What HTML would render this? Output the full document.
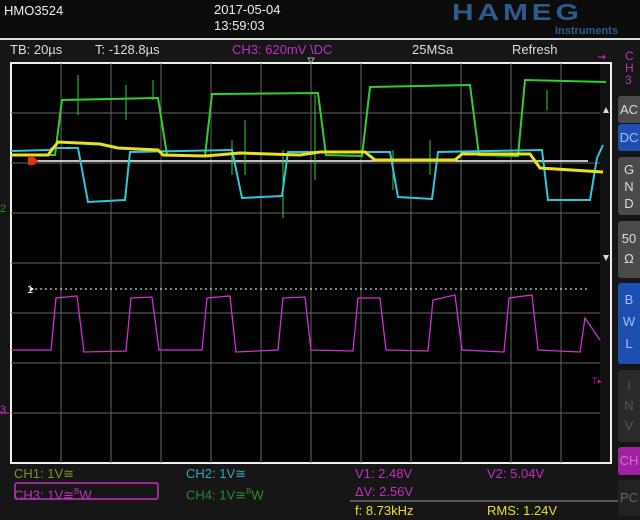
<!DOCTYPE html>
<html><head><meta charset="utf-8"><style>
html,body{margin:0;padding:0;}
body{width:640px;height:520px;background:#161616;position:relative;overflow:hidden;font-family:"Liberation Sans",sans-serif;font-size:13px;color:#ddd;}
.t{position:absolute;white-space:nowrap;line-height:14px;}
.top{position:absolute;left:0;top:0;width:640px;height:39px;background:#0c0c0c;}
.btn{position:absolute;left:618px;width:22px;text-align:center;font-size:13px;line-height:15px;border-radius:3px 0 0 3px;}
</style></head><body>
<div class="top"></div>
<div class="t" style="left:4px;top:4px;color:#eee">HMO3524</div>
<div class="t" style="left:214px;top:3px;color:#eee">2017-05-04</div>
<div class="t" style="left:214px;top:19px;color:#eee">13:59:03</div>
<div class="t" style="left:452px;top:0px;color:#2e5b8c;font-size:23px;font-weight:bold;letter-spacing:3px;transform:scaleX(1.3);transform-origin:left;line-height:24px">HAMEG</div>
<div class="t" style="left:555px;top:24px;color:#2e5b8c;font-size:11px;font-weight:bold">Instruments</div>
<div style="position:absolute;left:0;top:38px;width:640px;height:2px;background:#ddd"></div>
<div class="t" style="left:10px;top:43px">TB: 20µs</div>
<div class="t" style="left:95px;top:43px">T: -128.8µs</div>
<div class="t" style="left:232px;top:43px;color:#c030c0">CH3: 620mV \DC</div>
<div class="t" style="left:412px;top:43px">25MSa</div>
<div class="t" style="left:512px;top:43px">Refresh</div>
<svg style="position:absolute;left:0;top:0" width="640" height="520">
<rect x="11" y="63" width="600" height="400" fill="#000" stroke="#eee" stroke-width="2"/>
<g stroke="#666" stroke-width="1">
<path d="M61 63V463M111 63V463M161 63V463M211 63V463M261 63V463M311 63V463M361 63V463M411 63V463M461 63V463M511 63V463M561 63V463"/>
<path d="M11 113H600M11 163H600M11 213H600M11 263H600M11 313H600M11 363H600M11 413H600"/>
</g>
<rect x="600" y="64" width="10" height="398" fill="#111"/>
<path d="M603 113l3-6 3 6zM603 255l3 6 3-6z" fill="#ddd"/>
<path d="M308 58l3 5 3-5z" fill="none" stroke="#aaa"/>
<path d="M35 161H588" stroke="#fff" stroke-width="1.5"/>
<path d="M28 157h6l4 4-4 4h-6z" fill="#e03010"/>
<path d="M35 289H590" stroke="#fff" stroke-dasharray="2 3"/>
<text x="27" y="293" fill="#fff" font-size="11" font-family="Liberation Sans">1</text>
<path d="M34 289l-3-2v4z" fill="#fff"/>
<text x="0" y="212" fill="#2a8a2a" font-size="11" font-family="Liberation Sans">2</text>
<text x="0" y="413" fill="#c030c0" font-size="11" font-family="Liberation Sans">3</text>
<path d="M0 413h9" stroke="#c030c0"/>
<polyline fill="none" stroke="#30d030" stroke-width="2" points="11,155 55,155 62,100 158,98 167,155 205,156 212,94 318,93 326,155 362,156 370,87 470,85 479,155 518,156 525,80 606,82"/>
<path d="M78 75V115M126 85V120M153 80V100M245 120V175M283 150V218M315 95V180M393 150V190M430 140V175M547 90V110M232 140V175" stroke="#30d030"/>
<polyline fill="none" stroke="#30c8d8" stroke-width="2" points="11,151 50,150 52,148 78,148 88,202 125,200 130,152 232,150 242,198 282,196 288,152 390,152 398,197 432,199 438,152 542,150 548,200 590,200 597,158 603,145"/>
<polyline fill="none" stroke="#e8e020" stroke-width="3" points="11,155 48,155 58,142 100,144 118,148 158,150 163,155 205,156 240,153 300,155 320,152 365,152 375,160 455,160 462,154 530,154 540,168 603,172"/>
<polyline fill="none" stroke="#d030d0" stroke-width="1.3" points="11,350 51,350 56,298 77,296 84,352 126,351 131,298 152,297 159,350 202,350 207,298 230,296 236,352 278,350 283,298 305,297 311,350 353,351 358,298 380,298 386,350 428,351 433,300 455,295 462,350 504,352 509,298 532,295 538,350 580,352 585,318 600,340"/>
<text x="592" y="384" fill="#a02090" font-size="9" font-family="Liberation Sans">T▸</text>
<path d="M598 57h7l-2-2M605 57l-2 2" stroke="#c030c0" fill="none"/>
<rect x="15" y="483" width="143" height="16" fill="none" stroke="#c030c0" stroke-width="1.5" rx="2"/>
<path d="M350 501H640" stroke="#999"/>
</svg>
<div class="t" style="left:625px;top:50px;color:#c030c0;font-size:12px;line-height:12px;width:12px">C<br>H<br>3</div>
<div class="btn" style="top:96px;height:27px;background:#4a4a4a;line-height:27px">AC</div>
<div class="btn" style="top:124px;height:27px;background:#1e4eb0;color:#9cc0ff;line-height:27px">DC</div>
<div class="btn" style="top:157px;height:58px;background:#4a4a4a;padding-top:4px;box-sizing:border-box;line-height:17px">G<br>N<br>D</div>
<div class="btn" style="top:221px;height:57px;background:#4a4a4a;padding-top:8px;box-sizing:border-box;line-height:20px">50<br>Ω</div>
<div class="btn" style="top:283px;height:81px;background:#1e4eb0;color:#9cc0ff;padding-top:6px;box-sizing:border-box;line-height:22px">B<br>W<br>L</div>
<div class="btn" style="top:370px;height:72px;background:#2a2a2a;color:#555;padding-top:6px;box-sizing:border-box;line-height:20px">I<br>N<br>V</div>
<div class="btn" style="top:447px;height:28px;background:#a020a0;color:#d070d0;line-height:28px">CH</div>
<div class="btn" style="top:480px;height:36px;background:#222;color:#666;line-height:36px">PC</div>
<div class="t" style="left:14px;top:467px;color:#8c8c20">CH1: 1V≅</div>
<div class="t" style="left:186px;top:467px;color:#30a8b0">CH2: 1V≅</div>
<div class="t" style="left:355px;top:467px;color:#c030c0">V1: 2.48V</div>
<div class="t" style="left:487px;top:467px;color:#c030c0">V2: 5.04V</div>
<div class="t" style="left:14px;top:485px;color:#c030c0">CH3: 1V≅<sup style="font-size:8px">B</sup>W</div>
<div class="t" style="left:186px;top:485px;color:#2a8a2a">CH4: 1V≅<sup style="font-size:8px">B</sup>W</div>
<div class="t" style="left:355px;top:485px;color:#c030c0">ΔV: 2.56V</div>
<div class="t" style="left:355px;top:504px;color:#e8e020">f: 8.73kHz</div>
<div class="t" style="left:487px;top:504px;color:#e8e020">RMS: 1.24V</div>
</body></html>
